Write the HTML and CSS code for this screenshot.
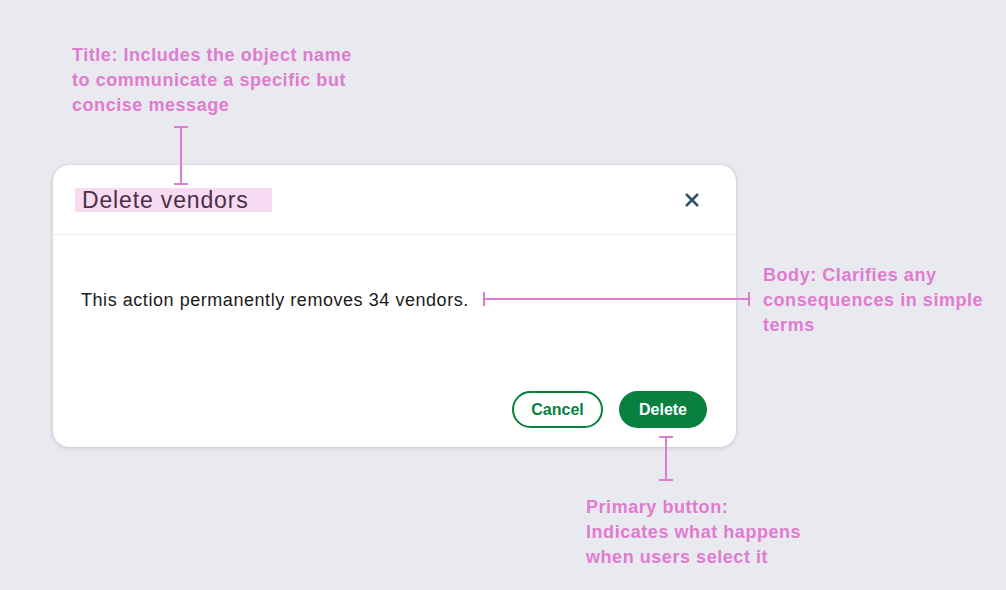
FILE: index.html
```html
<!DOCTYPE html>
<html lang="en">
<head>
<meta charset="utf-8">
<title>Delete vendors</title>
<link rel="stylesheet" href="styles.css">
</head>
<body>
<div class="stage">
  <p class="note note-title">Title: Includes the object name<br>to communicate a specific but<br>concise message</p>
  <div class="marker marker-v marker-title"></div>

  <section class="dialog">
    <header class="dialog-head">
      <h1 class="dialog-title">Delete vendors</h1>
      <button class="close" aria-label="Close">
        <svg width="16" height="16" viewBox="0 0 16 16"><path d="M2 2 L14 14 M14 2 L2 14" stroke="#2f5468" stroke-width="2.6" stroke-linecap="butt" fill="none"/></svg>
      </button>
    </header>
    <div class="dialog-body">
      <p class="dialog-text">This action permanently removes 34 vendors.</p>
    </div>
    <footer class="dialog-foot">
      <button class="btn btn-secondary">Cancel</button>
      <button class="btn btn-primary">Delete</button>
    </footer>
  </section>

  <div class="marker marker-h marker-body"></div>
  <p class="note note-body">Body: Clarifies any<br>consequences in simple<br>terms</p>

  <div class="marker marker-v marker-primary"></div>
  <p class="note note-primary">Primary button:<br>Indicates what happens<br>when users select it</p>
</div>
</body>
</html>
```

FILE: styles.css
```css
* { box-sizing: border-box; }
html, body {
  margin: 0;
  padding: 0;
  background: #e9eaf0;
  font-family: "Liberation Sans", Arial, sans-serif;
}
.stage {
  position: relative;
  width: 1006px;
  height: 590px;
  padding: 165px 0 0 53px;
}
.dialog {
  width: 683px;
  height: 282px;
  background: #ffffff;
  border-radius: 16px;
  box-shadow: 0 1px 4px rgba(40, 40, 60, 0.18), 0 0 1px rgba(40, 40, 60, 0.2);
  display: flex;
  flex-direction: column;
}
.dialog-head {
  height: 70px;
  border-bottom: 1px solid #ececf0;
  display: flex;
  align-items: flex-start;
  justify-content: space-between;
  padding: 23px 36px 0 22px;
}
.dialog-title {
  margin: 0;
  width: 197px;
  height: 24px;
  padding-left: 7px;
  background: #f7dbf2;
  color: #4b2e47;
  font-size: 23px;
  letter-spacing: 0.85px;
  font-weight: normal;
  line-height: 24px;
  white-space: nowrap;
}
.close {
  margin-top: 4px;
  width: 16px;
  height: 16px;
  padding: 0;
  border: 0;
  background: none;
  display: flex;
}
.dialog-body {
  flex: 1;
  padding: 55px 28px 0 28px;
}
.dialog-text {
  margin: 0;
  font-size: 18px;
  letter-spacing: 0.55px;
  line-height: 20px;
  color: #1a1a1a;
}
.dialog-foot {
  display: flex;
  justify-content: flex-end;
  gap: 16px;
  padding: 0 29px 19px 0;
}
.btn {
  height: 37px;
  border-radius: 19px;
  font-family: "Liberation Sans", Arial, sans-serif;
  font-size: 16px;
  font-weight: bold;
  padding: 0;
  cursor: pointer;
}
.btn-secondary {
  width: 91px;
  background: #ffffff;
  border: 2px solid #08803f;
  color: #08803f;
}
.btn-primary {
  width: 88px;
  background: #08803f;
  border: 0;
  color: #ffffff;
}
.note {
  position: absolute;
  margin: 0;
  color: #e07bd0;
  font-size: 18px;
  letter-spacing: 0.55px;
  font-weight: bold;
  line-height: 25px;
  white-space: nowrap;
}
.note-title { left: 72px; top: 43px; }
.note-body { left: 763px; top: 263px; }
.note-primary { left: 586px; top: 495px; }

.marker { position: absolute; }
.marker-v { width: 14px; }
.marker-v::before {
  content: "";
  position: absolute;
  left: 6px; top: 0; bottom: 0;
  width: 2px;
  background: #e07bd0;
}
.marker-v::after {
  content: "";
  position: absolute;
  left: 0; right: 0; top: 0; bottom: 0;
  border-top: 2px solid #e07bd0;
  border-bottom: 2px solid #e07bd0;
}
.marker-h { height: 14px; }
.marker-h::before {
  content: "";
  position: absolute;
  top: 6px; left: 0; right: 0;
  height: 2px;
  background: #e07bd0;
}
.marker-h::after {
  content: "";
  position: absolute;
  left: 0; right: 0; top: 0; bottom: 0;
  border-left: 2px solid #e07bd0;
  border-right: 2px solid #e07bd0;
}
.marker-title { left: 174px; top: 126px; height: 59px; }
.marker-body { left: 483px; top: 292px; width: 267px; }
.marker-primary { left: 659px; top: 436px; height: 45px; }
```
